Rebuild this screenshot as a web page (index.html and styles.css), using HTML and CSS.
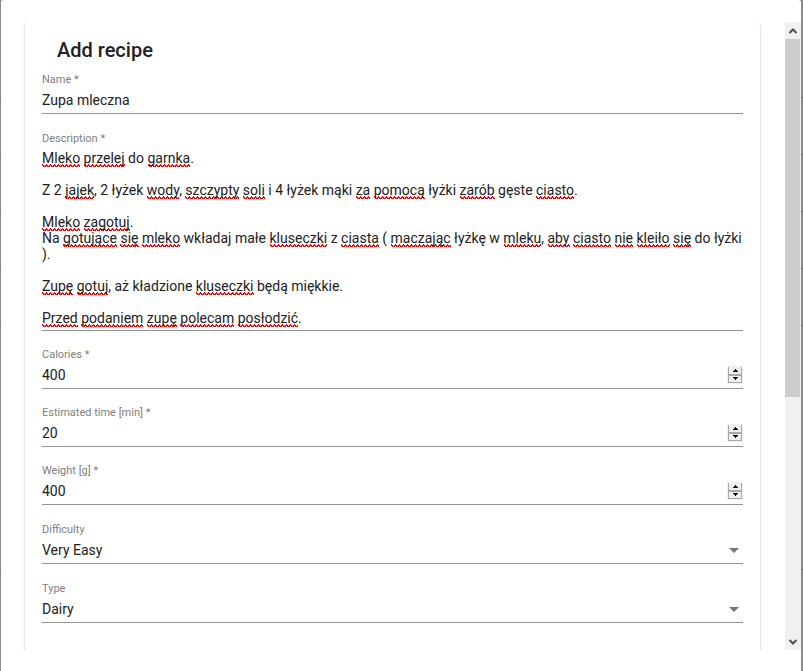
FILE: index.html
```html
<!DOCTYPE html>
<html lang="en">
<head>
<meta charset="utf-8">
<meta name="viewport" content="width=device-width, initial-scale=1">
<title>Add recipe</title>
<link rel="stylesheet" href="styles.css">
</head>
<body>
<main class="dialog">
  <div class="content">
    <form class="card">
      <h1 class="title">Add recipe</h1>

      <div class="field field-name">
        <label class="label" for="name">Name *</label>
        <input class="control" id="name" type="text" value="Zupa mleczna">
      </div>

      <div class="field field-text">
        <label class="label" for="description">Description *</label>
        <div class="editor">
          <div class="spelling" id="spelling" aria-hidden="true"></div>
          <textarea class="text" id="description" rows="11" spellcheck="false">Mleko przelej do garnka.

Z 2 jajek, 2 łyżek wody, szczypty soli i 4 łyżek mąki za pomocą łyżki zarób gęste ciasto.

Mleko zagotuj.
Na gotujące się mleko wkładaj małe kluseczki z ciasta ( maczając łyżkę w mleku, aby ciasto nie kleiło się do łyżki ).

Zupę gotuj, aż kładzione kluseczki będą miękkie.

Przed podaniem zupę polecam posłodzić.</textarea>
        </div>
      </div>

      <div class="field">
        <label class="label" for="calories">Calories *</label>
        <div class="row">
          <input class="control" id="calories" type="number" value="400">
          <div class="spinner">
            <button class="step" type="button" aria-label="Increase calories"><svg viewBox="0 0 5 3" shape-rendering="crispEdges"><path d="M2 0h1v1h1v1h1v1H0V2h1V1h1z"/></svg></button>
            <button class="step" type="button" aria-label="Decrease calories"><svg viewBox="0 0 5 3" shape-rendering="crispEdges"><path d="M0 0h5v1H4v1H3v1H2V2H1V1H0z"/></svg></button>
          </div>
        </div>
      </div>

      <div class="field">
        <label class="label" for="time">Estimated time [min] *</label>
        <div class="row">
          <input class="control" id="time" type="number" value="20">
          <div class="spinner">
            <button class="step" type="button" aria-label="Increase time"><svg viewBox="0 0 5 3" shape-rendering="crispEdges"><path d="M2 0h1v1h1v1h1v1H0V2h1V1h1z"/></svg></button>
            <button class="step" type="button" aria-label="Decrease time"><svg viewBox="0 0 5 3" shape-rendering="crispEdges"><path d="M0 0h5v1H4v1H3v1H2V2H1V1H0z"/></svg></button>
          </div>
        </div>
      </div>

      <div class="field">
        <label class="label" for="weight">Weight [g] *</label>
        <div class="row">
          <input class="control" id="weight" type="number" value="400">
          <div class="spinner">
            <button class="step" type="button" aria-label="Increase weight"><svg viewBox="0 0 5 3" shape-rendering="crispEdges"><path d="M2 0h1v1h1v1h1v1H0V2h1V1h1z"/></svg></button>
            <button class="step" type="button" aria-label="Decrease weight"><svg viewBox="0 0 5 3" shape-rendering="crispEdges"><path d="M0 0h5v1H4v1H3v1H2V2H1V1H0z"/></svg></button>
          </div>
        </div>
      </div>

      <div class="field field-select">
        <label class="label" for="difficulty">Difficulty</label>
        <div class="row">
          <select class="control" id="difficulty"><option>Very Easy</option></select>
          <svg class="arrow" viewBox="0 0 10 5"><path d="M0 0h10L5 5z"/></svg>
        </div>
      </div>

      <div class="field field-select">
        <label class="label" for="type">Type</label>
        <div class="row">
          <select class="control" id="type"><option>Dairy</option></select>
          <svg class="arrow" viewBox="0 0 10 5"><path d="M0 0h10L5 5z"/></svg>
        </div>
      </div>
    </form>
  </div>

  <div class="scrollbar" aria-hidden="true">
    <svg class="cap" viewBox="0 0 16 17"><path d="M4.500 11L8 7.500l3.500 3.500"/></svg>
    <div class="track"><div class="thumb"></div></div>
    <svg class="cap" viewBox="0 0 16 17"><path d="M4.500 7L8 10.500 11.500 7"/></svg>
  </div>
</main>
<script src="spelling.js"></script>
</body>
</html>
```
FILE: styles.css
```css
* {
  box-sizing: border-box;
}

body {
  margin: 0;
  padding: 0 2px 0 1px;
  color: #212121;
  font-family: Roboto, "Liberation Sans", sans-serif;
  font-size: 14px;
  background: linear-gradient(
    #8c8c8c 97px, #6e6e6e 97px 98px,
    #8c8c8c 98px 154px, #6e6e6e 154px 155px,
    #8c8c8c 155px 211px, #6e6e6e 211px 212px,
    #8c8c8c 212px 268px, #6e6e6e 268px 269px,
    #8c8c8c 269px 325px, #6e6e6e 325px 326px,
    #8c8c8c 326px 569px, #6e6e6e 569px 570px,
    #8c8c8c 570px);
}

.dialog {
  display: flex;
  height: 100vh;
  padding: 22px 0 21px 22px;
  border-radius: 2px 2px 0 0;
  background: #fff;
}

.content {
  flex: 1;
  min-width: 0;
  overflow: hidden;
  padding: 0 25px 0 2px;
}

.card {
  padding: 16px 17px 48px;
  border-radius: 4px;
  box-shadow:
    0 2px 1px -1px rgba(0, 0, 0, 0.2),
    0 1px 1px rgba(0, 0, 0, 0.14),
    0 1px 3px rgba(0, 0, 0, 0.24);
}

.title {
  margin: 0 0 7px;
  padding-left: 15px;
  font-size: 20px;
  font-weight: 500;
  line-height: 24px;
}

.field {
  display: flex;
  flex-direction: column;
  justify-content: flex-end;
  height: 58px;
  border-bottom: 1px solid #949494;
}

.field-name {
  height: 45px;
}

.field-text {
  height: auto;
  padding-top: 18px;
}

.field-select {
  height: 59px;
}

.label {
  color: #808080;
  font-size: 11px;
  line-height: 14px;
}

.control {
  width: 100%;
  min-width: 0;
  height: 26px;
  margin: 0;
  padding: 0 0 1px;
  border: 0;
  outline: 0;
  color: inherit;
  font: inherit;
  background: none;
  appearance: none;
}

.control[type="number"] {
  appearance: textfield;
}

.row {
  display: flex;
  align-items: center;
}

.editor {
  display: grid;
  padding: 4px 0;
}

.text,
.spelling {
  grid-area: 1 / 1;
  width: 100%;
  margin: 0;
  padding: 0;
  border: 0;
  font: inherit;
  line-height: 16px;
  white-space: pre-wrap;
  overflow-wrap: break-word;
}

.text {
  display: block;
  overflow: hidden;
  outline: 0;
  color: inherit;
  background: none;
  resize: none;
}

.spelling {
  color: transparent;
}

.wrong {
  padding-bottom: 1px;
  background: url("data:image/svg+xml,%3Csvg xmlns='http://www.w3.org/2000/svg' width='4' height='3' shape-rendering='crispEdges'%3E%3Cpath fill='red' d='M0 0h1v1h1v1h1V1h1v2H1V2H0z'/%3E%3C/svg%3E") left bottom repeat-x;
}

.spinner {
  display: flex;
  flex: none;
  flex-direction: column;
  width: 16px;
  height: 18px;
  padding: 1px;
  background: #f0f0f0;
}

.step {
  display: flex;
  flex: 1;
  align-items: center;
  justify-content: center;
  padding: 0;
  border: 1px solid #a9a9a9;
  border-top: 0;
  background: #eee;
}

.step + .step {
  border-top: 1px solid #a9a9a9;
}

.step svg {
  width: 5px;
  height: 3px;
}

.arrow {
  flex: none;
  width: 10px;
  height: 5px;
  margin-right: 4px;
  fill: #757575;
}

.scrollbar {
  display: flex;
  flex: none;
  flex-direction: column;
  width: 16px;
  background: #f0f0f0;
}

.cap {
  width: 16px;
  height: 17px;
  fill: none;
  stroke: #505050;
  stroke-width: 2;
}

.track {
  flex: 1;
}

.thumb {
  width: 15px;
  height: 60.3%;
  background: #cdcdcd;
}
```
FILE: spelling.js
```js
// Underlines the words that are not in the list of known words.
const known = new Set(["do", "Z", "z", "łyżek", "i", "mąki", "łyżki", "gęste", "Na",
  "wkładaj", "małe", "łyżkę", "w", "aż", "kładzione", "będą", "miękkie"]);
const text = document.getElementById("description");
const layer = document.getElementById("spelling");

function check() {
  layer.replaceChildren(...text.value.split(/(\p{L}+)/u).map(part => {
    if (!/\p{L}/u.test(part) || known.has(part)) return part;
    const word = document.createElement("span");
    word.className = "wrong";
    word.textContent = part;
    return word;
  }));
}

text.addEventListener("input", check);
check();
```
